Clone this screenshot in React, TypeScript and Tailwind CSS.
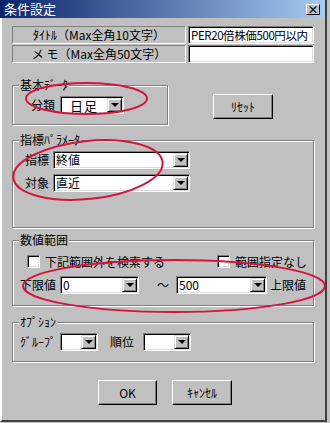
import React from "react";

const sunken =
  "border border-t-[#808080] border-l-[#808080] border-r-white border-b-white shadow-[inset_1px_1px_0_#000,inset_-1px_-1px_0_#dcdcdc]";
const raised =
  "border border-t-white border-l-white border-r-black border-b-black shadow-[inset_-1px_-1px_0_#808080]";

function Arrow() {
  return (
    <div className="w-0 h-0 border-l-[4px] border-l-transparent border-r-[4px] border-r-transparent border-t-[4px] border-t-black" />
  );
}

function Combo({ w, text, textCls = "" }: { w: string; text?: string; textCls?: string }) {
  return (
    <div className={`${w} h-[18px] bg-white ${sunken} p-[1px] flex`}>
      <div className={`flex-1 flex items-center whitespace-nowrap text-[12px] leading-[12px] ${textCls}`}>
        {text}
      </div>
      <div className="w-[15px] h-[14px] bg-[#c0c0c0] border border-t-[#dfdfdf] border-l-[#dfdfdf] border-r-black border-b-black shadow-[inset_1px_1px_0_#fff,inset_-1px_-1px_0_#808080] flex items-center justify-center">
        <Arrow />
      </div>
    </div>
  );
}

function Group({
  label,
  cls,
  children,
}: {
  label: string;
  cls: string;
  children?: React.ReactNode;
}) {
  return (
    <div
      className={`relative border border-[#808080] shadow-[inset_1px_1px_0_#fff,1px_1px_0_#fff] ${cls}`}
    >
      <div className="absolute left-[6px] -top-[8px] px-[1px] bg-[#c0c0c0] text-[12px] leading-[14px] whitespace-nowrap">
        {label}
      </div>
      {children}
    </div>
  );
}

function Check() {
  return <div className={`w-[13px] h-[13px] bg-white ${sunken}`} />;
}

function Button({ w, text }: { w: string; text: string }) {
  return (
    <div
      className={`${w} h-[25px] bg-[#c0c0c0] ${raised} flex items-center justify-center text-[12px] leading-[14px]`}
    >
      {text}
    </div>
  );
}

export default function App() {
  return (
    <div
      className="relative w-[330px] h-[423px] bg-[#c0c0c0] text-black overflow-hidden"
      style={{ fontFamily: '"Noto Sans CJK JP", "Noto Sans", sans-serif' }}
    >
      <div className="w-[327px] h-[422px] flex flex-col border-r-2 border-r-[#404040]">
        {/* title bar */}
        <div className="h-[18px] bg-[linear-gradient(to_right,#0a246a,#a6caf0)] flex items-center justify-between pl-[4px] pr-[5px]">
          <span className="text-white text-[13px] leading-[16px]">条件設定</span>
          <div className="w-[14px] h-[11px] bg-[#c0c0c0] border border-t-white border-l-white border-r-black border-b-black flex items-center justify-center text-[11px] leading-[9px] font-bold">
            ×
          </div>
        </div>

        {/* body */}
        <div className="flex-1 flex flex-col border-l-2 border-l-white border-b-2 border-b-[#404040] pl-[10px]">
          {/* title / memo rows */}
          <div className="flex gap-[2px] mt-[8px] h-[18px]">
            <div className="w-[174px] h-full border border-t-[#808080] border-l-[#808080] border-r-white border-b-white flex items-center justify-center text-[12px] leading-[14px] whitespace-nowrap">
              ﾀｲﾄﾙ（Max全角10文字）
            </div>
            <div className={`w-[126px] h-full bg-white ${sunken} pl-[2px] flex items-center text-[11.5px] leading-[12px] whitespace-nowrap tracking-[-0.4px]`}>
              PER20倍株価500円以内
            </div>
          </div>
          <div className="flex gap-[2px] mt-[1px] h-[18px]">
            <div className="w-[174px] h-full border border-t-[#808080] border-l-[#808080] border-r-white border-b-white flex items-center justify-center text-[12px] leading-[14px] whitespace-nowrap">
              メ モ（Max全角50文字）
            </div>
            <div className={`w-[126px] h-full bg-white ${sunken}`} />
          </div>

          {/* 基本データ + reset */}
          <div className="flex items-start mt-[22px]">
            <Group label="基本ﾃﾞｰﾀ" cls="w-[156px] h-[40px] pt-[10px] pl-[18px]">
              <div className="flex items-center gap-[5px]">
                <span className="text-[12px] leading-[14px]">分類</span>
                <Combo w="w-[64px]" text="日足" textCls="pl-[8px] text-[13px] leading-[13px] tracking-[1px]" />
              </div>
            </Group>
            <div className="ml-[45px] mt-[9px]">
              <Button w="w-[60px]" text="ﾘｾｯﾄ" />
            </div>
          </div>

          {/* 指標パラメータ */}
          <Group label="指標ﾊﾟﾗﾒｰﾀ" cls="mt-[15px] w-[302px] h-[88px] pt-[10px] pl-[12px]">
            <div className="flex flex-col gap-[5px]">
              <div className="flex items-center gap-[4px]">
                <span className="text-[12px] leading-[14px]">指標</span>
                <Combo w="w-[137px]" text="終値" textCls="pl-[1px]" />
              </div>
              <div className="flex items-center gap-[4px]">
                <span className="text-[12px] leading-[14px]">対象</span>
                <Combo w="w-[137px]" text="直近" textCls="pl-[1px]" />
              </div>
            </div>
          </Group>

          {/* 数値範囲 */}
          <Group label="数値範囲" cls="mt-[12px] w-[302px] h-[66px] pt-[14px]">
            <div className="flex items-center pl-[14px] h-[13px]">
              <Check />
              <span className="ml-[5px] text-[12px] leading-[14px] whitespace-nowrap">下記範囲外を検索する</span>
              <div className="ml-[52px]">
                <Check />
              </div>
              <span className="ml-[5px] text-[12px] leading-[14px] whitespace-nowrap">範囲指定なし</span>
            </div>
            <div className="flex items-center pl-[7px] mt-[8px]">
              <span className="text-[12px] leading-[14px] whitespace-nowrap">下限値</span>
              <div className="ml-[4px]">
                <Combo w="w-[79px]" text="0" textCls="pl-[1px]" />
              </div>
              <span className="ml-[18px] text-[12px] leading-[14px]">～</span>
              <div className="ml-[7px]">
                <Combo w="w-[91px]" text="500" textCls="pl-[1px]" />
              </div>
              <span className="ml-[3px] text-[12px] leading-[14px] whitespace-nowrap">上限値</span>
            </div>
          </Group>

          {/* オプション */}
          <Group label="ｵﾌﾟｼｮﾝ" cls="mt-[16px] w-[302px] h-[40px] pt-[10px] pl-[7px]">
            <div className="flex items-center">
              <span className="text-[12px] leading-[14px] whitespace-nowrap">ｸﾞﾙｰﾌﾟ</span>
              <div className="ml-[4px]">
                <Combo w="w-[38px]" />
              </div>
              <span className="ml-[12px] text-[12px] leading-[14px]">順位</span>
              <div className="ml-[9px]">
                <Combo w="w-[48px]" />
              </div>
            </div>
          </Group>

          {/* buttons */}
          <div className="flex mt-[18px] ml-[86px]">
            <Button w="w-[59px]" text="OK" />
            <div className="ml-[15px]">
              <Button w="w-[60px]" text="ｷｬﾝｾﾙ" />
            </div>
          </div>
        </div>
      </div>

      {/* red annotation ellipses */}
      <svg
        className="absolute left-0 top-0 pointer-events-none"
        width="330"
        height="423"
        viewBox="0 0 330 423"
      >
        <g fill="none" stroke="#d4143f" strokeWidth="2">
          <ellipse cx="86.5" cy="98.5" rx="60.5" ry="15.5" />
          <ellipse cx="88" cy="170" rx="75" ry="29" transform="rotate(-6 88 170)" />
          <ellipse cx="174" cy="286" rx="151" ry="26" />
        </g>
      </svg>
    </div>
  );
}
